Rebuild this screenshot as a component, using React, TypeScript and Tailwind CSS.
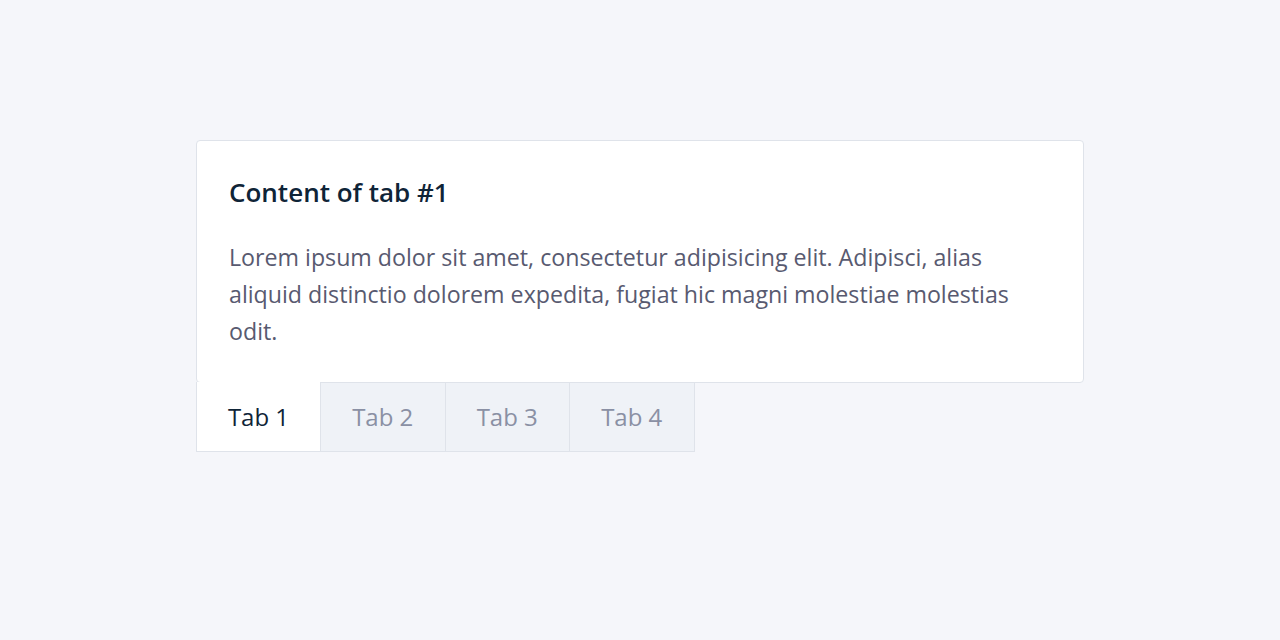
const tabs = ["Tab 1", "Tab 2", "Tab 3", "Tab 4"];

export default function App() {
  const active = 0;
  return (
    <div
      className="min-h-screen bg-[#f5f6fa] pt-[140px]"
      style={{ fontFamily: "'Open Sans', Lato, sans-serif" }}
    >
      <div className="mx-auto w-[888px]">
        <div className="rounded border border-[#dfe3ea] bg-white px-8 pt-[33px] pb-[32px]">
          <h2 className="text-[26px] leading-[36px] font-semibold text-[#0f2437]">
            Content of tab #1
          </h2>
          <p className="mt-[29px] text-[23.2px] leading-[37px] text-[#585a70]">
            Lorem ipsum dolor sit amet, consectetur adipisicing elit. Adipisci,
            alias aliquid distinctio dolorem expedita, fugiat hic magni molestiae
            molestias odit.
          </p>
        </div>
        <div className="relative -mt-px flex">
          {tabs.map((t, i) => (
            <button
              key={t}
              className={
                i === active
                  ? "h-[70px] w-[125px] border border-t-0 border-[#dfe3ea] bg-white text-[24px] text-[#0f2437]"
                  : "-ml-px h-[70px] w-[125.5px] border border-[#dfe3ea] bg-[#eff2f7] text-[24px] text-[#8a90a4]"
              }
            >
              {t}
            </button>
          ))}
        </div>
      </div>
    </div>
  );
}
